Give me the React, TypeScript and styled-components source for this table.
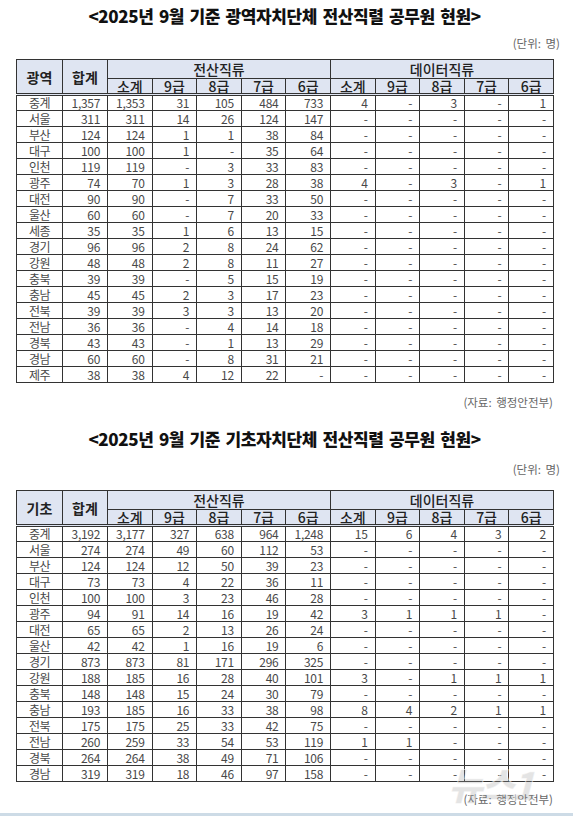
import React from "react";
import styled, { createGlobalStyle } from "styled-components";

const GlobalStyle = createGlobalStyle`
  html, body {
    margin: 0;
    padding: 0;
    background: #ffffff;
  }
  body {
    font-family: "Noto Sans CJK KR", "Noto Sans", sans-serif;
    color: #333;
  }
`;

const Page = styled.div`
  position: relative;
  width: 573px;
  height: 819px;
  overflow: hidden;
  background: #fff;
`;

const Wrapper = styled.div`
  width: 537px;
  margin-left: 16px;
  display: flex;
  flex-direction: column;
`;

const Title = styled.h2<{ $top: number }>`
  margin: ${(p) => p.$top}px 0 0;
  height: 20px;
  line-height: 20px;
  text-align: center;
  font-size: 17px;
  font-weight: 800;
  letter-spacing: -0.4px;
  word-spacing: 2px;
  color: #111;
`;

const Note = styled.div<{ $top: number }>`
  margin-top: ${(p) => p.$top}px;
  height: 14px;
  line-height: 14px;
  text-align: right;
  font-size: 11.5px;
  color: #666;
  word-spacing: 2px;
  margin-right: -7px;
`;

const Source = styled(Note)`
  margin-right: 0;
`;

const Table = styled.table<{ $top: number }>`
  margin-top: ${(p) => p.$top}px;
  width: 537px;
  border-collapse: collapse;
  table-layout: fixed;
  border: 1.5px solid #222;
`;

const HeadCell = styled.th<{ $bold?: boolean; $h: number; $last?: boolean }>`
  background: #dfe5f2;
  border: 1px solid #333;
  border-bottom: ${(p) => (p.$last ? "3px double #333" : "1px solid #333")};
  height: ${(p) => p.$h}px;
  padding: 0;
  font-size: 14px;
  font-weight: ${(p) => (p.$bold ? 700 : 500)};
  color: #222;
  line-height: 1;
  text-align: center;
  white-space: nowrap;
`;

const Row = styled.tr`
  height: 16px;
`;

const LabelCell = styled.td`
  border: 1px solid #333;
  padding: 0;
  font-size: 12px;
  line-height: 14px;
  text-align: center;
  color: #484848;
  letter-spacing: -0.5px;
`;

const NumCell = styled.td`
  border: 1px solid #333;
  padding: 0 7px 0 0;
  font-size: 12px;
  line-height: 14px;
  text-align: right;
  color: #484848;
  white-space: nowrap;
  letter-spacing: -0.3px;
`;

const Col = styled.col<{ $w: number }>`
  width: ${(p) => p.$w}px;
`;

const BottomRule = styled.div`
  position: absolute;
  left: 0;
  right: 0;
  top: 813px;
  height: 3px;
  background: #cddbe6;
`;

const Watermark = styled.div`
  position: absolute;
  left: 448px;
  top: 762px;
  font-size: 38px;
  line-height: 44px;
  font-weight: 900;
  font-style: italic;
  letter-spacing: -3px;
  color: rgba(160, 160, 160, 0.3);
  -webkit-text-stroke: 1px rgba(255, 255, 255, 0.6);
  pointer-events: none;
`;

type Line = [string, string[]];

const regional: Line[] = [
  ["중계", ["1,357", "1,353", "31", "105", "484", "733", "4", "-", "3", "-", "1"]],
  ["서울", ["311", "311", "14", "26", "124", "147", "-", "-", "-", "-", "-"]],
  ["부산", ["124", "124", "1", "1", "38", "84", "-", "-", "-", "-", "-"]],
  ["대구", ["100", "100", "1", "-", "35", "64", "-", "-", "-", "-", "-"]],
  ["인천", ["119", "119", "-", "3", "33", "83", "-", "-", "-", "-", "-"]],
  ["광주", ["74", "70", "1", "3", "28", "38", "4", "-", "3", "-", "1"]],
  ["대전", ["90", "90", "-", "7", "33", "50", "-", "-", "-", "-", "-"]],
  ["울산", ["60", "60", "-", "7", "20", "33", "-", "-", "-", "-", "-"]],
  ["세종", ["35", "35", "1", "6", "13", "15", "-", "-", "-", "-", "-"]],
  ["경기", ["96", "96", "2", "8", "24", "62", "-", "-", "-", "-", "-"]],
  ["강원", ["48", "48", "2", "8", "11", "27", "-", "-", "-", "-", "-"]],
  ["충북", ["39", "39", "-", "5", "15", "19", "-", "-", "-", "-", "-"]],
  ["충남", ["45", "45", "2", "3", "17", "23", "-", "-", "-", "-", "-"]],
  ["전북", ["39", "39", "3", "3", "13", "20", "-", "-", "-", "-", "-"]],
  ["전남", ["36", "36", "-", "4", "14", "18", "-", "-", "-", "-", "-"]],
  ["경북", ["43", "43", "-", "1", "13", "29", "-", "-", "-", "-", "-"]],
  ["경남", ["60", "60", "-", "8", "31", "21", "-", "-", "-", "-", "-"]],
  ["제주", ["38", "38", "4", "12", "22", "-", "-", "-", "-", "-", "-"]],
];

const basic: Line[] = [
  ["중계", ["3,192", "3,177", "327", "638", "964", "1,248", "15", "6", "4", "3", "2"]],
  ["서울", ["274", "274", "49", "60", "112", "53", "-", "-", "-", "-", "-"]],
  ["부산", ["124", "124", "12", "50", "39", "23", "-", "-", "-", "-", "-"]],
  ["대구", ["73", "73", "4", "22", "36", "11", "-", "-", "-", "-", "-"]],
  ["인천", ["100", "100", "3", "23", "46", "28", "-", "-", "-", "-", "-"]],
  ["광주", ["94", "91", "14", "16", "19", "42", "3", "1", "1", "1", "-"]],
  ["대전", ["65", "65", "2", "13", "26", "24", "-", "-", "-", "-", "-"]],
  ["울산", ["42", "42", "1", "16", "19", "6", "-", "-", "-", "-", "-"]],
  ["경기", ["873", "873", "81", "171", "296", "325", "-", "-", "-", "-", "-"]],
  ["강원", ["188", "185", "16", "28", "40", "101", "3", "-", "1", "1", "1"]],
  ["충북", ["148", "148", "15", "24", "30", "79", "-", "-", "-", "-", "-"]],
  ["충남", ["193", "185", "16", "33", "38", "98", "8", "4", "2", "1", "1"]],
  ["전북", ["175", "175", "25", "33", "42", "75", "-", "-", "-", "-", "-"]],
  ["전남", ["260", "259", "33", "54", "53", "119", "1", "1", "-", "-", "-"]],
  ["경북", ["264", "264", "38", "49", "71", "106", "-", "-", "-", "-", "-"]],
  ["경남", ["319", "319", "18", "46", "97", "158", "-", "-", "-", "-", "-"]],
];

const grades = ["소계", "9급", "8급", "7급", "6급"];

function StaffTable({ label, rows, top }: { label: string; rows: Line[]; top: number }) {
  return (
    <Table $top={top}>
      <colgroup>
        <Col $w={46} />
        <Col $w={45} />
        {Array.from({ length: 10 }).map((_, i) => (
          <Col key={i} $w={44.6} />
        ))}
      </colgroup>
      <thead>
        <tr>
          <HeadCell rowSpan={2} $bold $h={33} $last>
            {label}
          </HeadCell>
          <HeadCell rowSpan={2} $bold $h={33} $last>
            합계
          </HeadCell>
          <HeadCell colSpan={5} $h={18}>
            전산직류
          </HeadCell>
          <HeadCell colSpan={5} $h={18}>
            데이터직류
          </HeadCell>
        </tr>
        <tr>
          {[...grades, ...grades].map((g, i) => (
            <HeadCell key={i} $h={14} $last>
              {g}
            </HeadCell>
          ))}
        </tr>
      </thead>
      <tbody>
        {rows.map(([name, values]) => (
          <Row key={name}>
            <LabelCell>{name}</LabelCell>
            {values.map((v, i) => (
              <NumCell key={i}>{v}</NumCell>
            ))}
          </Row>
        ))}
      </tbody>
    </Table>
  );
}

export default function App() {
  return (
    <Page>
      <GlobalStyle />
      <Wrapper>
        <Title $top={6}>&lt;2025년 9월 기준 광역자치단체 전산직렬 공무원 현원&gt;</Title>
        <Note $top={10}>(단위: 명)</Note>
        <StaffTable label="광역" rows={regional} top={9} />
        <Source $top={12}>(자료: 행정안전부)</Source>

        <Title $top={20}>&lt;2025년 9월 기준 기초자치단체 전산직렬 공무원 현원&gt;</Title>
        <Note $top={13}>(단위: 명)</Note>
        <StaffTable label="기초" rows={basic} top={14} />
        <Source $top={10}>(자료: 행정안전부)</Source>
      </Wrapper>
      <Watermark>뉴스1</Watermark>
      <BottomRule />
    </Page>
  );
}
